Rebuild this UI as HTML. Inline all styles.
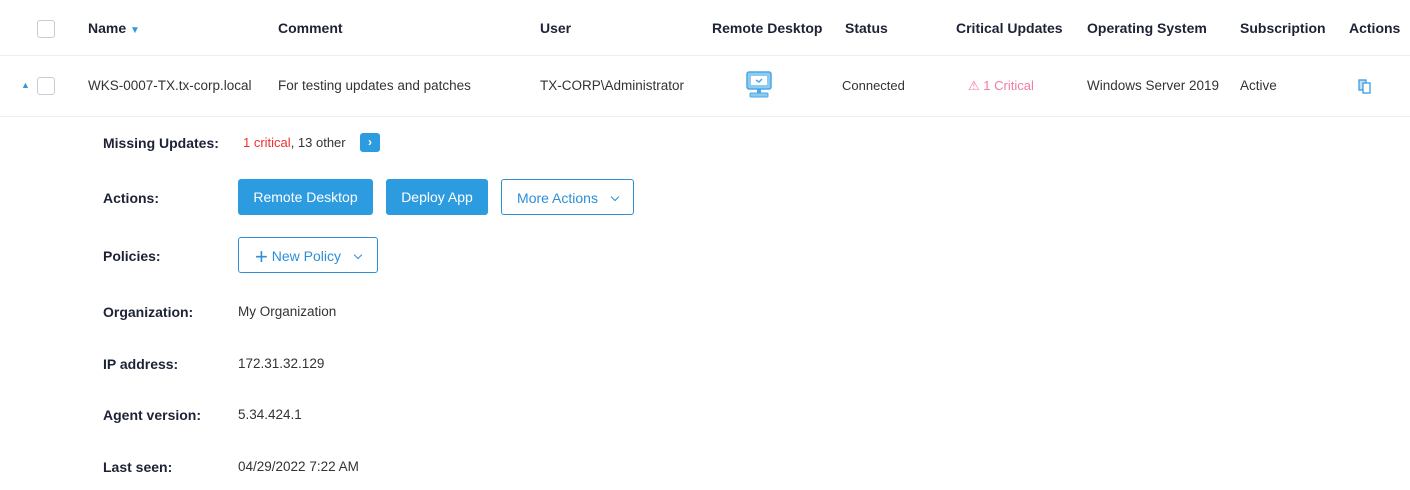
<!DOCTYPE html>
<html><head><meta charset="utf-8"><style>
body{margin:0;width:1410px;height:490px;background:#fff;font-family:"Liberation Sans",sans-serif;color:#333;position:relative;overflow:hidden}
.a{position:absolute;white-space:nowrap}
.h{font-weight:bold;font-size:14px;color:#1e2235;top:20px}
.c{font-size:13.5px;color:#333;top:78px}
.l{font-weight:bold;font-size:14px;color:#1e2235;left:103px}
.v{font-size:13.5px;color:#333;left:238px}
.cb{position:absolute;width:16px;height:16px;border:1px solid #c8ccd6;border-radius:3px;background:#fff}
.btn{position:absolute;height:36px;border-radius:3px;font-size:14px;line-height:36px;text-align:center;box-sizing:border-box}
.pri{background:#2d9be0;color:#fff}
.out{border:1px solid #2d8fd8;color:#2d8fd8;background:#fff}
.chev{display:inline-block;width:5px;height:5px;border-right:1.3px solid #2d8fd8;border-bottom:1.3px solid #2d8fd8;transform:rotate(45deg);vertical-align:3px;margin-left:14px}
</style></head><body>
<div style="position:absolute;left:0;right:0;top:55px;height:1px;background:#eceef4"></div>
<div style="position:absolute;left:0;right:0;top:116px;height:1px;background:#eceef4"></div>
<div class="cb" style="left:37px;top:20px"></div>
<div class="a h" style="left:88px">Name <span style="color:#2d9be0;font-size:10px">&#9660;</span></div>
<div class="a h" style="left:278px">Comment</div>
<div class="a h" style="left:540px">User</div>
<div class="a h" style="left:712px">Remote Desktop</div>
<div class="a h" style="left:845px">Status</div>
<div class="a h" style="left:956px">Critical Updates</div>
<div class="a h" style="left:1087px">Operating System</div>
<div class="a h" style="left:1240px">Subscription</div>
<div class="a h" style="left:1349px">Actions</div>

<div class="a" style="left:21px;top:80px;color:#2d9be0;font-size:9px">&#9650;</div>
<div class="cb" style="left:37px;top:77px"></div>
<div class="a c" style="left:88px">WKS-0007-TX.tx-corp.local</div>
<div class="a c" style="left:278px">For testing updates and patches</div>
<div class="a c" style="left:540px">TX-CORP\Administrator</div>
<svg class="a" style="left:745px;top:71px" width="28" height="28" viewBox="0 0 28 28"><rect x="2" y="1" width="24" height="17" rx="2" fill="#8ccaf0" stroke="#4aa8e6" stroke-width="1.5"/><rect x="6" y="5" width="16" height="9" fill="#fff"/><path d="M11 9l3 2 3-3" stroke="#4aa8e6" fill="none" stroke-width="1.5"/><rect x="12" y="18" width="4" height="4" fill="#4aa8e6"/><rect x="5" y="22" width="18" height="4" rx="1" fill="#8ccaf0" stroke="#4aa8e6"/></svg>
<div class="a c" style="left:842px;font-size:13px">Connected</div>
<div class="a c" style="left:968px;color:#f37ba4;font-size:13px">&#9888; 1 Critical</div>
<div class="a c" style="left:1087px">Windows Server 2019</div>
<div class="a c" style="left:1240px">Active</div>
<svg class="a" style="left:1357px;top:78px" width="16" height="16" viewBox="0 0 16 16"><rect x="2" y="2" width="7" height="10" fill="#bfe0f7" stroke="#3d9be0" stroke-width="1.3"/><rect x="6" y="5" width="7" height="10" fill="#fff" stroke="#3d9be0" stroke-width="1.3"/></svg>

<div class="a l" style="top:135px">Missing Updates:</div>
<div class="a" style="left:243px;top:135px;font-size:13px"><span style="color:#f03030">1 critical</span>, 13 other</div>
<div style="position:absolute;left:360px;top:133px;width:20px;height:19px;border-radius:3px;background:#2d9be0;color:#fff;font-size:12px;text-align:center;line-height:19px;font-weight:bold">&#8250;</div>

<div class="a l" style="top:190px">Actions:</div>
<div class="btn pri" style="left:238px;top:179px;width:135px">Remote Desktop</div>
<div class="btn pri" style="left:386px;top:179px;width:102px">Deploy App</div>
<div class="btn out" style="left:501px;top:179px;width:133px">More Actions<span class="chev"></span></div>

<div class="a l" style="top:248px">Policies:</div>
<div class="btn out" style="left:238px;top:237px;width:140px"><span style="font-size:22px;vertical-align:-3px">+</span> New Policy<span class="chev"></span></div>

<div class="a l" style="top:304px">Organization:</div>
<div class="a v" style="top:304px">My Organization</div>
<div class="a l" style="top:356px">IP address:</div>
<div class="a v" style="top:356px">172.31.32.129</div>
<div class="a l" style="top:407px">Agent version:</div>
<div class="a v" style="top:407px">5.34.424.1</div>
<div class="a l" style="top:459px">Last seen:</div>
<div class="a v" style="top:459px">04/29/2022 7:22 AM</div>
</body></html>
